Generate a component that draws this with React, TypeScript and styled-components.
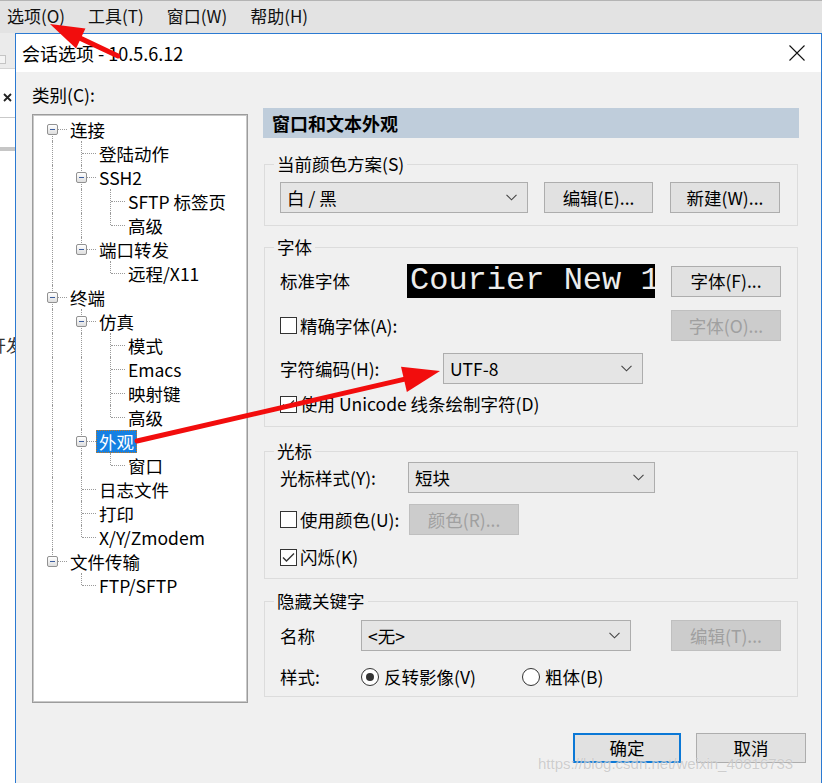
import React from 'react';
import styled, { createGlobalStyle } from 'styled-components';

const FONT = `"Noto Sans CJK SC", "Noto Sans", sans-serif`;

const GlobalStyle = createGlobalStyle`
  html, body { margin: 0; padding: 0; }
  body { width: 822px; height: 783px; overflow: hidden; background: #fff; font-family: ${FONT}; font-size: 17.5px; color: #000; }
  * { box-sizing: border-box; }
`;

const Page = styled.div`
  position: relative;
  width: 822px;
  height: 783px;
  overflow: hidden;
  display: flex;
  flex-direction: column;
  font-family: ${FONT};
  font-size: 17.5px;
  line-height: 22px;
`;

const MenuBar = styled.div`
  height: 33px;
  flex-shrink: 0;
  background: #e3e3e3;
  border-top: 1px solid #b4b4b4;
  display: flex;
  align-items: center;
  padding: 0 0 2px 7px;
  gap: 23px;
  font-size: 17px;
`;

const MenuItem = styled.span`
  color: #111;
`;

const Main = styled.div`
  flex: 1;
  display: flex;
  min-height: 0;
`;

const LeftStrip = styled.div`
  width: 15px;
  flex-shrink: 0;
  background: #fff;
  overflow: hidden;
  display: flex;
  flex-direction: column;
`;

const StripToolbar = styled.div`
  height: 36px;
  background: #ebebeb;
  border-bottom: 1px solid #d4d4d4;
  display: flex;
  align-items: flex-end;
  padding-bottom: 4px;
`;

const StripIcon = styled.div`
  width: 6px;
  height: 9px;
  border: 1px solid #c4c4c4;
  border-left: none;
  background: #f4f4f4;
`;

const StripTab = styled.div`
  height: 49px;
  border-bottom: 1px solid #c9c9c9;
  display: flex;
  align-items: center;
  padding: 8px 0 0 3px;
`;

const StripGap = styled.div`
  height: 29px;
`;

const StripBar = styled.div`
  height: 4px;
  background: #c6c6c6;
`;

const StripText = styled.div`
  margin: 183px 0 0 -11px;
  white-space: nowrap;
  font-size: 17px;
  color: #333;
`;

const Dialog = styled.div`
  flex: 1;
  display: flex;
  flex-direction: column;
  border: 1px solid #2b7ad2;
  border-bottom: none;
  background: #f0f0f0;
  min-width: 0;
`;

const TitleBar = styled.div`
  height: 38px;
  flex-shrink: 0;
  background: #fff;
  display: flex;
  align-items: center;
  justify-content: space-between;
  padding: 0 16px 0 6px;
  font-size: 18px;
`;

const Body = styled.div`
  flex: 1;
  display: flex;
  flex-direction: column;
  padding: 12px 0 0 16px;
`;

const TopSection = styled.div`
  display: flex;
  align-items: flex-start;
`;

const LeftCol = styled.div`
  width: 216px;
  flex-shrink: 0;
  display: flex;
  flex-direction: column;
`;

const CatLabel = styled.div`
  height: 22px;
  margin-bottom: 8px;
`;

const TreeBox = styled.div`
  height: 589px;
  background: #fff;
  border: 1px solid #9c9c9c;
  box-shadow: inset 0 0 0 1px #c9c9c9;
  padding: 2px 0 0 5px;
  overflow: hidden;
`;

const TreeRow = styled.div`
  display: flex;
  align-items: center;
  height: 24px;
`;

const Cell = styled.div<{ $top: boolean; $bottom: boolean; $h: boolean }>`
  position: relative;
  width: 29px;
  height: 24px;
  flex-shrink: 0;
  &::before {
    content: '';
    display: ${p => (p.$top || p.$bottom ? 'block' : 'none')};
    position: absolute;
    left: 14px;
    top: ${p => (p.$top ? '0' : '12px')};
    bottom: ${p => (p.$bottom ? '0' : '12px')};
    border-left: 1px dotted #9a9a9a;
  }
  &::after {
    content: '';
    display: ${p => (p.$h ? 'block' : 'none')};
    position: absolute;
    left: 15px;
    right: 0;
    top: 12px;
    border-top: 1px dotted #9a9a9a;
  }
`;

const Expander = styled.div`
  position: absolute;
  left: 9px;
  top: 7px;
  width: 11px;
  height: 11px;
  z-index: 1;
  border: 1px solid #919191;
  border-radius: 2px;
  background: linear-gradient(#ffffff, #dedede);
  &::after {
    content: '';
    position: absolute;
    left: 2px;
    right: 2px;
    top: 4px;
    height: 1px;
    background: #3d5e9e;
  }
`;

const NodeLabel = styled.span<{ $selected?: boolean }>`
  height: 23px;
  line-height: 23px;
  padding: 0 3px;
  white-space: nowrap;
  background: ${p => (p.$selected ? '#1580e2' : 'transparent')};
  color: ${p => (p.$selected ? '#fff' : '#000')};
  outline: ${p => (p.$selected ? '1px dotted #c77a20' : 'none')};
  outline-offset: -1px;
`;

const RightCol = styled.div`
  width: 536px;
  margin: 24px 0 0 15px;
  display: flex;
  flex-direction: column;
`;

const Header = styled.div`
  height: 30px;
  background: #bfcddb;
  font-weight: 700;
  font-size: 18px;
  display: flex;
  align-items: center;
  padding-left: 9px;
`;

const Group = styled.fieldset<{ $mt: number; $pt: number; $pb: number }>`
  margin: ${p => p.$mt}px 1px 0 1px;
  min-inline-size: 0;
  border: 1px solid #dcdcdc;
  padding: ${p => p.$pt}px 16px ${p => p.$pb}px 15px;
`;

const Legend = styled.legend`
  margin-left: -6px;
  padding: 0 3px;
  line-height: 22px;
`;

const FRow = styled.div<{ $mt?: number; $h?: number }>`
  display: flex;
  align-items: center;
  margin-top: ${p => p.$mt ?? 0}px;
  height: ${p => p.$h ?? 31}px;
`;

const FieldLabel = styled.span<{ $w: number }>`
  width: ${p => p.$w}px;
  flex-shrink: 0;
  white-space: nowrap;
`;

const Combo = styled.div<{ $w: number }>`
  width: ${p => p.$w}px;
  height: 31px;
  flex-shrink: 0;
  background: #e5e5e5;
  border: 1px solid #adadad;
  display: flex;
  align-items: center;
  justify-content: space-between;
  padding: 0 10px 0 6px;
  white-space: nowrap;
`;

const Btn = styled.button<{ $w: number; $disabled?: boolean; $default?: boolean; $ml?: string; $h?: number }>`
  width: ${p => p.$w}px;
  height: ${p => p.$h ?? 31}px;
  flex-shrink: 0;
  margin-left: ${p => p.$ml ?? '0'};
  padding: 0;
  font: inherit;
  line-height: 22px;
  display: flex;
  align-items: center;
  justify-content: center;
  background: ${p => (p.$disabled ? '#cccccc' : '#e1e1e1')};
  border: ${p => (p.$default ? '2px solid #0b78d6' : `1px solid ${p.$disabled ? '#bfbfbf' : '#adadad'}`)};
  color: ${p => (p.$disabled ? '#a0a0a0' : '#000')};
  white-space: nowrap;
`;

const FontPreview = styled.div`
  width: 248px;
  height: 34px;
  flex-shrink: 0;
  background: #000;
  color: #ececec;
  font-family: "Liberation Mono", "Courier New", monospace;
  font-size: 32px;
  line-height: 34px;
  padding-left: 3px;
  white-space: nowrap;
  overflow: hidden;
`;

const CheckLabel = styled.label<{ $w?: number }>`
  display: flex;
  align-items: center;
  gap: 3px;
  white-space: nowrap;
  width: ${p => (p.$w ? `${p.$w}px` : 'auto')};
  flex-shrink: 0;
`;

const Box = styled.span`
  width: 17px;
  height: 17px;
  flex-shrink: 0;
  border: 1px solid #333;
  background: #fff;
  display: flex;
  align-items: center;
  justify-content: center;
`;

const RadioLabel = styled.label<{ $w?: number }>`
  display: flex;
  align-items: center;
  gap: 5px;
  white-space: nowrap;
  width: ${p => (p.$w ? `${p.$w}px` : 'auto')};
  flex-shrink: 0;
`;

const RadioCircle = styled.span<{ $on?: boolean }>`
  width: 18px;
  height: 18px;
  flex-shrink: 0;
  border: 1px solid #333;
  border-radius: 50%;
  background: #fff;
  display: flex;
  align-items: center;
  justify-content: center;
  &::after {
    content: '';
    display: ${p => (p.$on ? 'block' : 'none')};
    width: 8px;
    height: 8px;
    border-radius: 50%;
    background: #333;
  }
`;

const Footer = styled.div`
  display: flex;
  justify-content: flex-end;
  gap: 15px;
  margin-top: 30px;
  padding-right: 15px;
`;

const Overlay = styled.svg`
  position: absolute;
  left: 0;
  top: 0;
  pointer-events: none;
`;

const Watermark = styled.div`
  position: absolute;
  left: 538px;
  top: 754px;
  font-family: "Liberation Sans", Arial, sans-serif;
  font-size: 15px;
  line-height: 20px;
  color: rgba(175, 175, 175, 0.6);
  text-shadow: 0 0 1px rgba(255, 255, 255, 0.8);
  white-space: nowrap;
  pointer-events: none;
`;

type Node = { label: string; children?: Node[]; selected?: boolean };
type Row = { label: string; guides: boolean[]; top: boolean; bottom: boolean; hasChildren: boolean; selected?: boolean };

const TREE: Node[] = [
  {
    label: '连接',
    children: [
      { label: '登陆动作' },
      { label: 'SSH2', children: [{ label: 'SFTP 标签页' }, { label: '高级' }] },
      { label: '端口转发', children: [{ label: '远程/X11' }] },
    ],
  },
  {
    label: '终端',
    children: [
      { label: '仿真', children: [{ label: '模式' }, { label: 'Emacs' }, { label: '映射键' }, { label: '高级' }] },
      { label: '外观', selected: true, children: [{ label: '窗口' }] },
      { label: '日志文件' },
      { label: '打印' },
      { label: 'X/Y/Zmodem' },
    ],
  },
  { label: '文件传输', children: [{ label: 'FTP/SFTP' }] },
];

function flatten(nodes: Node[], level: number, guides: boolean[], out: Row[]) {
  nodes.forEach((n, i) => {
    const isLast = i === nodes.length - 1;
    out.push({
      label: n.label,
      guides: [...guides],
      top: !(level === 0 && i === 0),
      bottom: !isLast,
      hasChildren: !!n.children,
      selected: n.selected,
    });
    if (n.children) flatten(n.children, level + 1, [...guides, !isLast], out);
  });
}

const ROWS: Row[] = [];
flatten(TREE, 0, [], ROWS);

const Chevron = () => (
  <svg width="11" height="7" viewBox="0 0 11 7">
    <polyline points="0.5,0.8 5.5,5.8 10.5,0.8" fill="none" stroke="#444" strokeWidth="1.1" />
  </svg>
);

const Check = ({ on }: { on?: boolean }) => (
  <Box>
    {on && (
      <svg width="13" height="11" viewBox="0 0 13 11">
        <polyline points="1,5.5 4.5,9 12,1.5" fill="none" stroke="#333" strokeWidth="1.4" />
      </svg>
    )}
  </Box>
);

const Arrow = ({ x1, y1, x2, y2, len, half }: { x1: number; y1: number; x2: number; y2: number; len: number; half: number }) => {
  const dx = x2 - x1;
  const dy = y2 - y1;
  const d = Math.hypot(dx, dy);
  const ux = dx / d;
  const uy = dy / d;
  const bx = x2 - ux * len;
  const by = y2 - uy * len;
  const nx = -uy;
  const ny = ux;
  const pts = `${x2},${y2} ${bx + nx * half},${by + ny * half} ${bx - nx * half},${by - ny * half}`;
  return (
    <g>
      <line x1={x1} y1={y1} x2={bx + ux * 2} y2={by + uy * 2} stroke="#f20d0d" strokeWidth="5" strokeLinecap="round" />
      <polygon points={pts} fill="#f20d0d" />
    </g>
  );
};

export default function App() {
  return (
    <>
      <GlobalStyle />
      <Page>
        <MenuBar>
          <MenuItem>选项(O)</MenuItem>
          <MenuItem>工具(T)</MenuItem>
          <MenuItem>窗口(W)</MenuItem>
          <MenuItem>帮助(H)</MenuItem>
        </MenuBar>
        <Main>
          <LeftStrip>
            <StripToolbar>
              <StripIcon />
            </StripToolbar>
            <StripTab>
              <svg width="9" height="9" viewBox="0 0 9 9">
                <path d="M1 1 L8 8 M8 1 L1 8" stroke="#222" strokeWidth="1.8" />
              </svg>
            </StripTab>
            <StripGap />
            <StripBar />
            <StripText>开发</StripText>
          </LeftStrip>
          <Dialog>
            <TitleBar>
              <span>会话选项 - 10.5.6.12</span>
              <svg width="16" height="16" viewBox="0 0 16 16">
                <path d="M0.5 0.5 L15.5 15.5 M15.5 0.5 L0.5 15.5" stroke="#111" strokeWidth="1.1" />
              </svg>
            </TitleBar>
            <Body>
              <TopSection>
                <LeftCol>
                  <CatLabel>类别(C):</CatLabel>
                  <TreeBox>
                    {ROWS.map((r, idx) => (
                      <TreeRow key={idx}>
                        {r.guides.map((g, i) => (
                          <Cell key={i} $top={g} $bottom={g} $h={false} />
                        ))}
                        <Cell $top={r.top} $bottom={r.bottom} $h>
                          {r.hasChildren && <Expander />}
                        </Cell>
                        <NodeLabel $selected={r.selected}>{r.label}</NodeLabel>
                      </TreeRow>
                    ))}
                  </TreeBox>
                </LeftCol>
                <RightCol>
                  <Header>窗口和文本外观</Header>

                  <Group $mt={15} $pt={7} $pb={12}>
                    <Legend>当前颜色方案(S)</Legend>
                    <FRow>
                      <Combo $w={248}>
                        <span>白 / 黑</span>
                        <Chevron />
                      </Combo>
                      <Btn $w={109} $ml="16px">编辑(E)...</Btn>
                      <Btn $w={110} $ml="17px">新建(W)...</Btn>
                    </FRow>
                  </Group>

                  <Group $mt={10} $pt={6} $pb={11}>
                    <Legend>字体</Legend>
                    <FRow $h={34}>
                      <FieldLabel $w={127}>标准字体</FieldLabel>
                      <FontPreview>Courier New 10</FontPreview>
                      <Btn $w={110} $ml="auto">字体(F)...</Btn>
                    </FRow>
                    <FRow $mt={12}>
                      <CheckLabel>
                        <Check />
                        精确字体(A):
                      </CheckLabel>
                      <Btn $w={110} $ml="auto" $disabled>字体(O)...</Btn>
                    </FRow>
                    <FRow $mt={12}>
                      <FieldLabel $w={163}>字符编码(H):</FieldLabel>
                      <Combo $w={200}>
                        <span>UTF-8</span>
                        <Chevron />
                      </Combo>
                    </FRow>
                    <FRow $mt={9} $h={22}>
                      <CheckLabel>
                        <Check on />
                        使用 Unicode 线条绘制字符(D)
                      </CheckLabel>
                    </FRow>
                  </Group>

                  <Group $mt={13} $pt={0} $pb={10}>
                    <Legend>光标</Legend>
                    <FRow>
                      <FieldLabel $w={128}>光标样式(Y):</FieldLabel>
                      <Combo $w={247}>
                        <span>短块</span>
                        <Chevron />
                      </Combo>
                    </FRow>
                    <FRow $mt={11}>
                      <CheckLabel $w={129}>
                        <Check />
                        使用颜色(U):
                      </CheckLabel>
                      <Btn $w={110} $disabled>颜色(R)...</Btn>
                    </FRow>
                    <FRow $mt={11} $h={22}>
                      <CheckLabel>
                        <Check on />
                        闪烁(K)
                      </CheckLabel>
                    </FRow>
                  </Group>

                  <Group $mt={11} $pt={8} $pb={8}>
                    <Legend>隐藏关键字</Legend>
                    <FRow>
                      <FieldLabel $w={81}>名称</FieldLabel>
                      <Combo $w={270}>
                        <span>&lt;无&gt;</span>
                        <Chevron />
                      </Combo>
                      <Btn $w={110} $ml="auto" $disabled>编辑(T)...</Btn>
                    </FRow>
                    <FRow $mt={15} $h={22}>
                      <FieldLabel $w={81}>样式:</FieldLabel>
                      <RadioLabel $w={161}>
                        <RadioCircle $on />
                        反转影像(V)
                      </RadioLabel>
                      <RadioLabel>
                        <RadioCircle />
                        粗体(B)
                      </RadioLabel>
                    </FRow>
                  </Group>
                </RightCol>
              </TopSection>
              <Footer>
                <Btn $w={108} $h={30} $default>确定</Btn>
                <Btn $w={110} $h={30}>取消</Btn>
              </Footer>
            </Body>
          </Dialog>
        </Main>
        <Watermark>https://blog.csdn.net/weixin_40816733</Watermark>
        <Overlay width="822" height="783" viewBox="0 0 822 783">
          <Arrow x1={118} y1={56} x2={50} y2={24} len={34} half={11} />
          <Arrow x1={137} y1={441} x2={440} y2={371} len={37} half={13} />
        </Overlay>
      </Page>
    </>
  );
}
